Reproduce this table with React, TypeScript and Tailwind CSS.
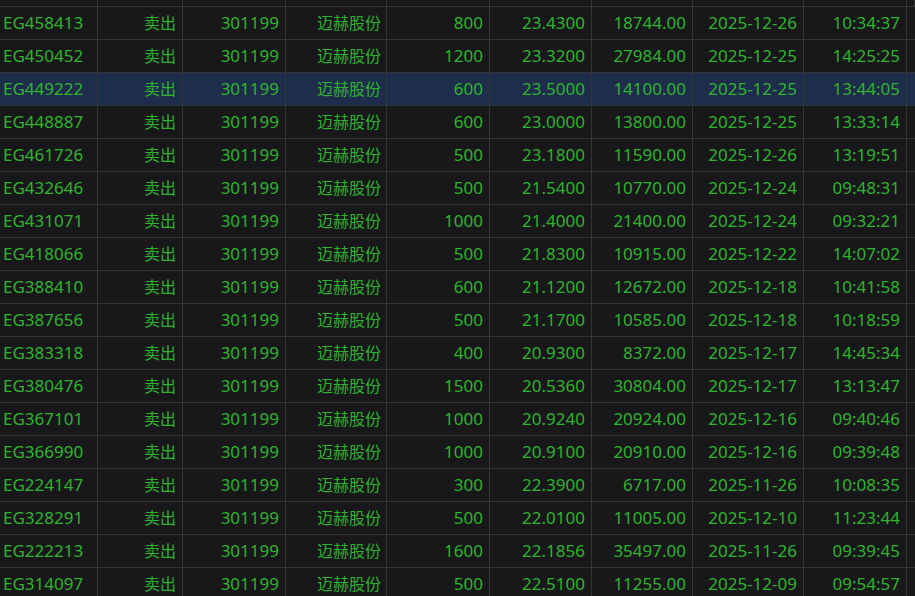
const rows: [string, string, string, string, string, string, string][] = [
  ['EG458413', '800', '23.4300', '18744.00', '2025-12-26', '10:34:37', ''],
  ['EG450452', '1200', '23.3200', '27984.00', '2025-12-25', '14:25:25', ''],
  ['EG449222', '600', '23.5000', '14100.00', '2025-12-25', '13:44:05', 'sel'],
  ['EG448887', '600', '23.0000', '13800.00', '2025-12-25', '13:33:14', ''],
  ['EG461726', '500', '23.1800', '11590.00', '2025-12-26', '13:19:51', ''],
  ['EG432646', '500', '21.5400', '10770.00', '2025-12-24', '09:48:31', ''],
  ['EG431071', '1000', '21.4000', '21400.00', '2025-12-24', '09:32:21', ''],
  ['EG418066', '500', '21.8300', '10915.00', '2025-12-22', '14:07:02', ''],
  ['EG388410', '600', '21.1200', '12672.00', '2025-12-18', '10:41:58', ''],
  ['EG387656', '500', '21.1700', '10585.00', '2025-12-18', '10:18:59', ''],
  ['EG383318', '400', '20.9300', '8372.00', '2025-12-17', '14:45:34', ''],
  ['EG380476', '1500', '20.5360', '30804.00', '2025-12-17', '13:13:47', ''],
  ['EG367101', '1000', '20.9240', '20924.00', '2025-12-16', '09:40:46', ''],
  ['EG366990', '1000', '20.9100', '20910.00', '2025-12-16', '09:39:48', ''],
  ['EG224147', '300', '22.3900', '6717.00', '2025-11-26', '10:08:35', ''],
  ['EG328291', '500', '22.0100', '11005.00', '2025-12-10', '11:23:44', ''],
  ['EG222213', '1600', '22.1856', '35497.00', '2025-11-26', '09:39:45', ''],
  ['EG314097', '500', '22.5100', '11255.00', '2025-12-09', '09:54:57', ''],
]

const grid = 'grid grid-cols-[98px_85px_103px_101px_103px_102px_101px_111px_103px_1fr]'
const cell = 'border-r border-[#333436] px-[6px] flex items-center justify-end whitespace-nowrap'

export default function App() {
  return (
    <div
      className="w-[915px] h-[596px] overflow-hidden bg-[#18181a] text-[#2fb32f] text-[17px]"
      style={{ fontFamily: '"Noto Sans", "Noto Sans CJK SC", sans-serif' }}
    >
      {/* cut-off row above */}
      <div className={`${grid} h-[7px] border-b border-[#333436]`}>
        {Array.from({ length: 10 }).map((_, i) => (
          <div key={i} className="border-r border-[#333436]" />
        ))}
      </div>
      {rows.map(r => (
        <div
          key={r[0]}
          className={`${grid} h-[33px] border-b border-[#333436] ${r[6] ? 'bg-[#1e2d4b]' : ''}`}
        >
          <div className="border-r border-[#333436] pl-[3px] flex items-center">{r[0]}</div>
          <div className={`${cell} text-[16px]`}>卖出</div>
          <div className={cell}>301199</div>
          <div className={`${cell} text-[16px] pr-[5px]`}>迈赫股份</div>
          <div className={cell}>{r[1]}</div>
          <div className={cell}>{r[2]}</div>
          <div className={cell}>{r[3]}</div>
          <div className={cell}>{r[4]}</div>
          <div className={cell}>{r[5]}</div>
          <div />
        </div>
      ))}
    </div>
  )
}
